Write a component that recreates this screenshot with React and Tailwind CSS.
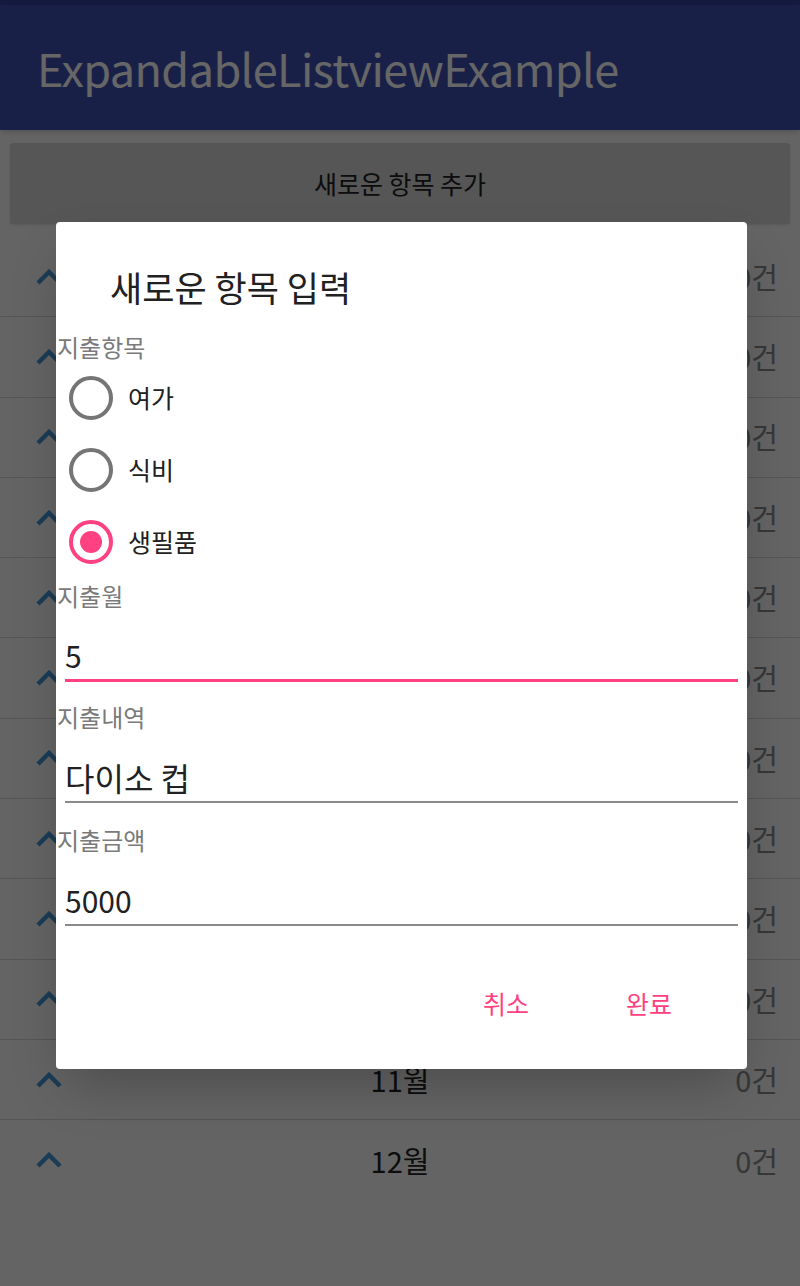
import React, { useState } from "react";

const FONT = { fontFamily: '"Noto Sans CJK KR", "Noto Sans", sans-serif' };

const months = ["1월", "2월", "3월", "4월", "5월", "6월", "7월", "8월", "9월", "10월", "11월", "12월"];
const categories = ["여가", "식비", "생필품"];

const Chevron = () => (
  <svg width="26" height="16" viewBox="0 0 26 16" fill="none">
    <polyline points="2,14 13,3 24,14" stroke="#4496d7" strokeWidth="4.5" />
  </svg>
);

const Radio = ({ checked }) => (
  <div
    className={`w-[44px] h-[44px] rounded-full border-[4px] flex items-center justify-center ${
      checked ? "border-[#ff4081]" : "border-[#757575]"
    }`}
  >
    {checked && <div className="w-[22px] h-[22px] rounded-full bg-[#ff4081]" />}
  </div>
);

const Field = ({ label, value, focused, mt, size }) => (
  <>
    <div className={`text-[24px] leading-[30px] text-[#7a7a7a] pl-[1px] ${mt}`}>{label}</div>
    <div
      className={`mx-[9px] ${size} leading-[40px] text-[#212121] pb-[4px] ${
        focused ? "border-b-[3px] border-[#ff4081]" : "border-b-[2px] border-[#8a8a8a]"
      } ${label === "지출월" ? "mt-[24px]" : "mt-[25px]"}`}
    >
      {value}
    </div>
  </>
);

const App = () => {
  const [selected, setSelected] = useState("생필품");

  return (
    <div className="relative w-[800px] h-[1286px] overflow-hidden bg-[#fafafa]" style={FONT}>
      <div className="h-[5px] bg-[#303f9f]" />
      <div className="h-[125px] bg-[#3f51b5] flex items-center pl-[37px] shadow-md">
        <span className="text-white text-[45px] leading-none tracking-[-0.6px]">ExpandableListviewExample</span>
      </div>

      <div className="px-[10px] pt-[13px]">
        <div className="h-[81px] bg-[#d6d6d6] rounded-[3px] shadow flex items-center justify-center text-[25px] text-[#212121]">
          새로운 항목 추가
        </div>
      </div>

      <div className="mt-[13px]">
        {months.map((m, i) => (
          <div
            key={m}
            className={`h-[80.3px] grid grid-cols-3 items-center ${
              i < months.length - 1 ? "border-b border-[#d4d4d4]" : ""
            }`}
          >
            <div className="pl-[36px] flex items-center">
              <Chevron />
            </div>
            <div className="text-center text-[29px] text-[#212121]">{m}</div>
            <div className="text-right pr-[22px] text-[29px] text-[#8a8a8a]">0건</div>
          </div>
        ))}
      </div>

      <div className="absolute inset-0 bg-black/60" />

      <div className="absolute left-[56px] top-[222px] w-[691px] h-[847px] bg-white rounded-[4px] shadow-2xl flex flex-col">
        <div className="pt-[43px] pl-[54px] text-[35px] leading-[44px] text-[#212121]">새로운 항목 입력</div>

        <div className="mt-[23px] text-[24px] leading-[30px] text-[#7a7a7a] pl-[1px]">지출항목</div>
        <div className="flex flex-col">
          {categories.map((c) => (
            <div
              key={c}
              className="h-[72px] flex items-center pl-[13px] gap-[15px] cursor-pointer"
              onClick={() => setSelected(c)}
            >
              <Radio checked={selected === c} />
              <span className="text-[25px] text-[#212121]">{c}</span>
            </div>
          ))}
        </div>

        <Field label="지출월" value="5" focused mt="mt-[3px]" size="text-[30px]" />
        <Field label="지출내역" value="다이소 컵" mt="mt-[20px]" size="text-[32px]" />
        <Field label="지출금액" value="5000" mt="mt-[22px]" size="text-[30px]" />

        <div className="mt-[54px] flex justify-end pr-[40px] gap-[27px]">
          <button className="w-[116px] h-[48px] text-[25px] text-[#ff4081]">취소</button>
          <button className="w-[116px] h-[48px] text-[25px] text-[#ff4081]">완료</button>
        </div>
      </div>
    </div>
  );
};

export default App;
